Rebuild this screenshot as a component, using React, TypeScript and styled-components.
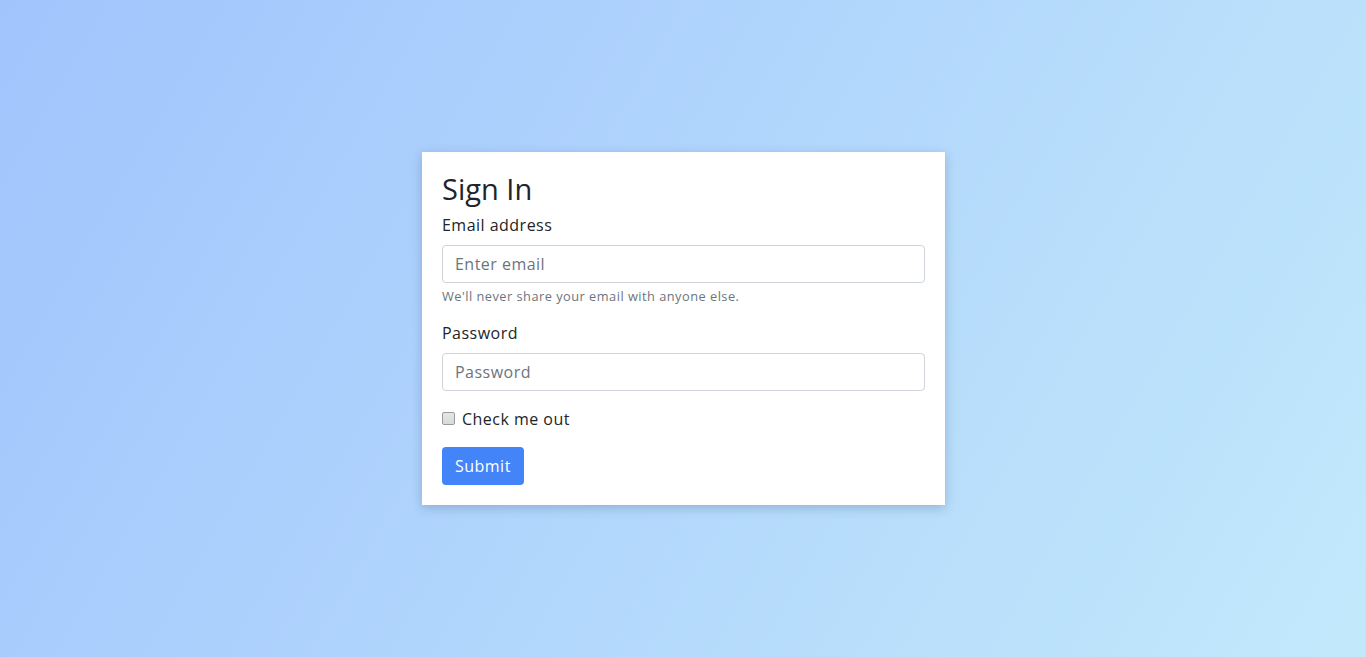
import styled, { createGlobalStyle } from 'styled-components';

const GlobalStyle = createGlobalStyle`
  * {
    box-sizing: border-box;
  }
  html, body {
    margin: 0;
    height: 100%;
  }
  body {
    font-family: 'Open Sans', 'Liberation Sans', sans-serif;
    font-size: 16px;
    line-height: 1.5;
    letter-spacing: 0.03em;
    color: #212529;
  }
  #root {
    height: 100%;
  }
`;

export default function App() {
  return (
    <>
      <GlobalStyle />
      <Page>
        <Card>
          <Title>Sign In</Title>
          <form onSubmit={(e) => e.preventDefault()}>
            <FormGroup>
              <Label htmlFor='email'>Email address</Label>
              <Input id='email' type='email' placeholder='Enter email' />
              <Help>We'll never share your email with anyone else.</Help>
            </FormGroup>
            <FormGroup>
              <Label htmlFor='password'>Password</Label>
              <Input id='password' type='password' placeholder='Password' />
            </FormGroup>
            <CheckRow>
              <CheckBox id='check' type='checkbox' />
              <CheckLabel htmlFor='check'>Check me out</CheckLabel>
            </CheckRow>
            <SubmitButton type='submit'>Submit</SubmitButton>
          </form>
        </Card>
      </Page>
    </>
  );
}

const Page = styled.main`
  min-height: 100%;
  display: flex;
  align-items: center;
  justify-content: center;
  padding-left: 1px;
  background: linear-gradient(120deg, #a1c4fd 0%, #c2e9fb 100%);
`;

const Card = styled.section`
  width: 523px;
  padding: 20px;
  background: #fff;
  box-shadow: 0 3px 10px rgba(40, 60, 100, 0.25);
`;

const Title = styled.h2`
  margin: 0 0 8px;
  font-size: 29px;
  font-weight: 400;
  line-height: 33px;
  letter-spacing: 0;
`;

const FormGroup = styled.div`
  margin-bottom: 16px;
`;

const Label = styled.label`
  display: inline-block;
  margin-bottom: 8px;
`;

const Input = styled.input`
  display: block;
  width: 100%;
  height: 38px;
  padding: 6px 12px;
  font: inherit;
  letter-spacing: inherit;
  color: #495057;
  background: #fff;
  border: 1px solid #ced4da;
  border-radius: 4px;

  &::placeholder {
    color: #6c757d;
  }
`;

const Help = styled.small`
  display: block;
  margin-top: 4px;
  font-size: 12.8px;
  line-height: 18px;
  color: #6c757d;
`;

const CheckRow = styled.div`
  display: flex;
  align-items: center;
  gap: 7px;
  margin-bottom: 16px;
`;

const CheckBox = styled.input`
  appearance: none;
  width: 13px;
  height: 13px;
  margin: 0 0 2px;
  background: linear-gradient(#e6e6e6, #d9d9d9);
  border: 1px solid #9a9a9a;
  border-radius: 2px;

  &:checked {
    background: #4281fb;
    border-color: #2f6de0;
  }
`;

const CheckLabel = styled.label`
  line-height: 24px;
`;

const SubmitButton = styled.button`
  height: 38px;
  padding: 6px 13px;
  font: inherit;
  letter-spacing: inherit;
  color: #fff;
  background: #4384f8;
  border: none;
  border-radius: 4px;
`;
